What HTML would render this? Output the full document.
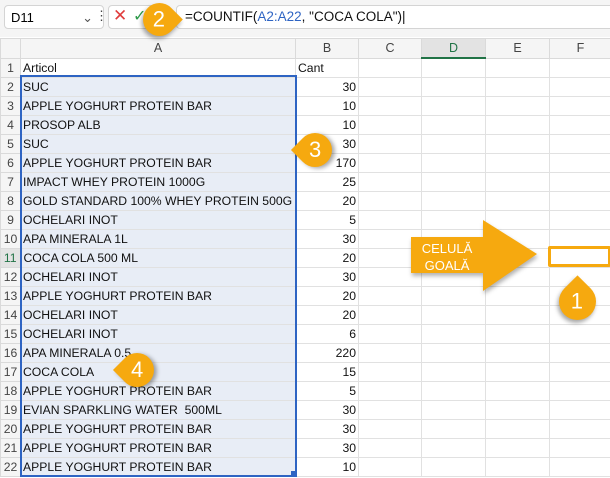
<!DOCTYPE html><html><head><style>
body{margin:0;width:610px;height:478px;overflow:hidden;background:#fff;font-family:"Liberation Sans",Arial,sans-serif;position:relative}
.a{position:absolute}
table{position:absolute;left:0;top:38px;border-collapse:collapse;table-layout:fixed;width:611px}
td{height:18px;border:1px solid #e1e1e1;font-size:12.2px;padding:0 2px;white-space:nowrap;overflow:visible;color:#111}
td.h{background:#f5f5f5;color:#444;text-align:center;border-color:#dadada;font-size:12.5px}
td.r{background:#f5f5f5;color:#444;text-align:center;border-color:#dadada;padding:0}
td.A{background:#e8edf6}
td.n{text-align:right}
.drop{background:#f6a90f;color:#fff;font-size:22px;display:flex;align-items:center;justify-content:center;box-shadow:1px 3px 4px rgba(0,0,0,.35)}
</style></head><body>
<div class="a" style="left:0;top:0;width:610px;height:37px;background:#f5f5f5"></div>
<div class="a" style="left:4px;top:5px;width:100px;height:24px;border:1px solid #d4d4d4;border-radius:4px;background:#fff;font-size:13px;line-height:24px;padding-left:6px;box-sizing:border-box">D11<span style="position:absolute;right:10px;top:0;color:#555">&#8964;</span></div>
<div class="a" style="left:94px;top:8px;font-size:13px;color:#444;left:95px">&#8942;</div>
<div class="a" style="left:108px;top:5px;width:62px;height:24px;border:1px solid #d4d4d4;border-radius:4px;background:#fff;box-sizing:border-box"></div>
<div class="a" style="left:113px;top:6px;color:#e03c3c;font-size:17px">&#10005;</div>
<div class="a" style="left:133px;top:6px;color:#2e9b4a;font-size:16px">&#10003;</div>
<div class="a" style="left:176px;top:5px;width:440px;height:24px;border:1px solid #d4d4d4;border-radius:4px;background:#fff;box-sizing:border-box"></div>
<div class="a" style="left:185px;top:9px;font-size:13.5px;color:#111">=COUNTIF(<span style="color:#2e64c3">A2:A22</span>, "COCA COLA")|</div>
<table>
<colgroup><col style="width:20px"><col style="width:275px"><col style="width:63px"><col style="width:63px"><col style="width:64px"><col style="width:64px"><col style="width:62px"></colgroup>
<tr><td class="h"></td><td class="h">A</td><td class="h">B</td><td class="h">C</td><td class="h" style="background:#e3e3e3;border-bottom:2px solid #217346;color:#217346">D</td><td class="h">E</td><td class="h">F</td></tr>
<tr><td class="r">1</td><td>Articol</td><td>Cant</td><td></td><td></td><td></td><td></td></tr>
<tr><td class="r">2</td><td class="A">SUC</td><td class="n">30</td><td></td><td></td><td></td><td></td></tr>
<tr><td class="r">3</td><td class="A">APPLE YOGHURT PROTEIN BAR</td><td class="n">10</td><td></td><td></td><td></td><td></td></tr>
<tr><td class="r">4</td><td class="A">PROSOP ALB</td><td class="n">10</td><td></td><td></td><td></td><td></td></tr>
<tr><td class="r">5</td><td class="A">SUC</td><td class="n">30</td><td></td><td></td><td></td><td></td></tr>
<tr><td class="r">6</td><td class="A">APPLE YOGHURT PROTEIN BAR</td><td class="n">170</td><td></td><td></td><td></td><td></td></tr>
<tr><td class="r">7</td><td class="A">IMPACT WHEY PROTEIN 1000G</td><td class="n">25</td><td></td><td></td><td></td><td></td></tr>
<tr><td class="r">8</td><td class="A">GOLD STANDARD 100% WHEY PROTEIN 500G</td><td class="n">20</td><td></td><td></td><td></td><td></td></tr>
<tr><td class="r">9</td><td class="A">OCHELARI INOT</td><td class="n">5</td><td></td><td></td><td></td><td></td></tr>
<tr><td class="r">10</td><td class="A">APA MINERALA 1L</td><td class="n">30</td><td></td><td></td><td></td><td></td></tr>
<tr><td class="r" style="color:#217346;background:#e3e3e3;border-right:2px solid #217346">11</td><td class="A">COCA COLA 500 ML</td><td class="n">20</td><td></td><td></td><td></td><td></td></tr>
<tr><td class="r">12</td><td class="A">OCHELARI INOT</td><td class="n">30</td><td></td><td></td><td></td><td></td></tr>
<tr><td class="r">13</td><td class="A">APPLE YOGHURT PROTEIN BAR</td><td class="n">20</td><td></td><td></td><td></td><td></td></tr>
<tr><td class="r">14</td><td class="A">OCHELARI INOT</td><td class="n">20</td><td></td><td></td><td></td><td></td></tr>
<tr><td class="r">15</td><td class="A">OCHELARI INOT</td><td class="n">6</td><td></td><td></td><td></td><td></td></tr>
<tr><td class="r">16</td><td class="A">APA MINERALA 0.5</td><td class="n">220</td><td></td><td></td><td></td><td></td></tr>
<tr><td class="r">17</td><td class="A">COCA COLA</td><td class="n">15</td><td></td><td></td><td></td><td></td></tr>
<tr><td class="r">18</td><td class="A">APPLE YOGHURT PROTEIN BAR</td><td class="n">5</td><td></td><td></td><td></td><td></td></tr>
<tr><td class="r">19</td><td class="A">EVIAN SPARKLING WATER&nbsp; 500ML</td><td class="n">30</td><td></td><td></td><td></td><td></td></tr>
<tr><td class="r">20</td><td class="A">APPLE YOGHURT PROTEIN BAR</td><td class="n">30</td><td></td><td></td><td></td><td></td></tr>
<tr><td class="r">21</td><td class="A">APPLE YOGHURT PROTEIN BAR</td><td class="n">30</td><td></td><td></td><td></td><td></td></tr>
<tr><td class="r">22</td><td class="A">APPLE YOGHURT PROTEIN BAR</td><td class="n">10</td><td></td><td></td><td></td><td></td></tr>
</table>
<div class="a" style="left:20px;top:75px;width:273px;height:398px;border:2px solid #2e64c3"></div>
<div class="a" style="left:291px;top:471px;width:5px;height:5px;background:#2e64c3"></div>
<div class="a" style="left:548px;top:246px;width:57px;height:15px;border:3px solid #f6a90f;border-radius:2px"></div>
<div class="a drop" style="left:143px;top:3px;width:33px;height:33px;border-radius:50% 0 50% 50%;transform:rotate(45deg)"><span style="transform:rotate(-45deg)">2</span></div>
<div class="a drop" style="left:298px;top:133px;width:34px;height:34px;border-radius:0 50% 50% 50%;transform:rotate(-45deg)"><span style="transform:rotate(45deg)">3</span></div>
<div class="a drop" style="left:120px;top:353px;width:34px;height:34px;border-radius:0 50% 50% 50%;transform:rotate(-45deg)"><span style="transform:rotate(45deg)">4</span></div>
<div class="a drop" style="left:559px;top:283px;width:37px;height:37px;border-radius:0 50% 50% 50%;transform:rotate(45deg)"><span style="transform:rotate(-45deg)">1</span></div>
<svg class="a" style="left:408px;top:218px;filter:drop-shadow(1px 3px 2px rgba(0,0,0,.3))" width="135" height="80"><polygon points="3,19 75,19 75,2 129,36 75,73 75,55 3,55" fill="#f6a90f"/></svg>
<div class="a" style="left:412px;top:240px;width:70px;color:#fff;font-size:13px;line-height:17px;text-align:center">CELULĂ<br>GOALĂ</div>
</body></html>
